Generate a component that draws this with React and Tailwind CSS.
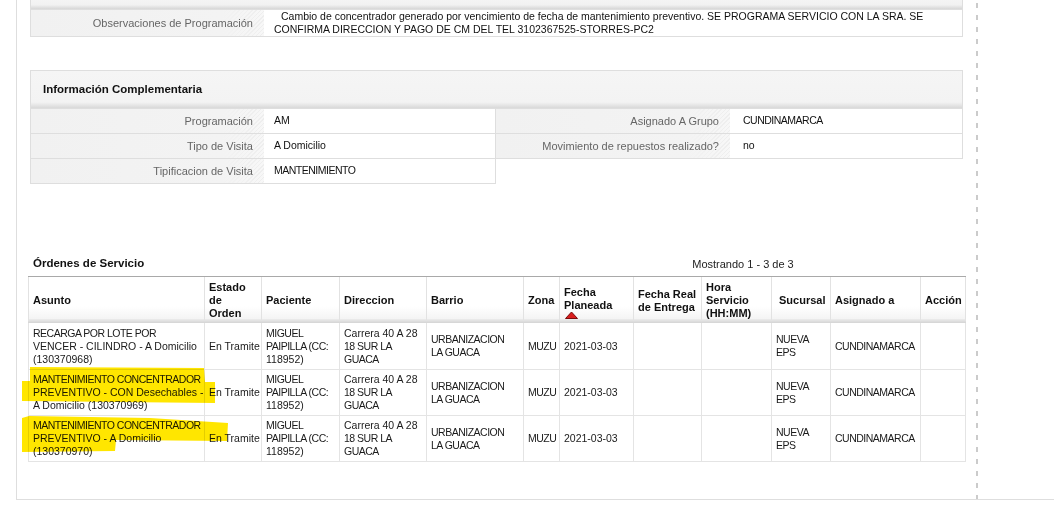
const COLS = 'grid-cols-[177px_57px_78px_87px_97px_36px_74px_68px_70px_59px_90px_45px]'

const ROWS = [
  {
    h: 'h-[47px]',
    asunto: ['RECARGA POR LOTE POR', 'VENCER - CILINDRO - A Domicilio', '(130370968)'],
  },
  {
    h: 'h-[46px]',
    asunto: ['MANTENIMIENTO CONCENTRADOR', 'PREVENTIVO - CON Desechables -', 'A Domicilio (130370969)'],
  },
  {
    h: 'h-[46px]',
    asunto: ['MANTENIMIENTO CONCENTRADOR', 'PREVENTIVO - A Domicilio', '(130370970)'],
  },
]

const isCaps = (s) => /[A-Z]/.test(s) && s === s.toUpperCase()

function Lines({ items }) {
  return (
    <div className="whitespace-nowrap">
      {items.map((line, i) => (
        <div key={i} className={isCaps(line) ? 'tracking-[-0.5px]' : ''}>
          {line}
        </div>
      ))}
    </div>
  )
}

const labelBg =
  'bg-[linear-gradient(to_right,#f1f1f1_0,#f3f3f3_82%,rgba(245,245,245,0.4)_100%),repeating-linear-gradient(135deg,#e9e9e9_0,#e9e9e9_1px,#f9f9f9_1px,#f9f9f9_3px)]'

function InfoRow({ label, value, last, labelW, caps }) {
  return (
    <div className="flex h-[25px] border-b border-[#dedede]">
      <div
        className={`${labelW} ${labelBg} flex items-center justify-end pr-[11px] text-[11px] text-[#666]`}
      >
        {label}
      </div>
      <div
        className={`flex flex-1 items-center bg-white text-[10.5px] text-[#111] ${last ? 'pl-[13px]' : 'pl-[10px]'} ${caps ? 'tracking-[-0.5px]' : ''}`}
      >
        {value}
      </div>
    </div>
  )
}

function HeadCell({ children, className = '' }) {
  return (
    <div
      className={`flex items-center border-r border-[#e2e2e2] pl-[4px] pt-[4px] text-[11px] font-bold leading-[13px] text-[#111] ${className}`}
    >
      {children}
    </div>
  )
}

function Cell({ children, className = '' }) {
  return (
    <div
      className={`flex items-center border-r border-[#e4e4e4] pl-[4px] text-[10.5px] leading-[13px] text-[#1a1a1a] ${className}`}
    >
      {children}
    </div>
  )
}

export default function App() {
  return (
    <div className="relative h-[507px] w-[1054px] overflow-hidden bg-white font-['Liberation_Sans',Arial,sans-serif]">
      <div className="ml-[16px] flex h-[500px] w-[1100px] border-b border-l border-[#dedede]">
        <div className="w-[959px] pl-[13px]">
          {/* observaciones */}
          <div className="w-[933px]">
            <div className="h-[9px] border-x border-[#dedede] bg-[linear-gradient(to_bottom,#f4f4f4_0,#f1f1f1_55%,#d6d6d6_100%)]" />
            <div className="flex h-[28px] border border-[#dedede]">
              <div
                className={`w-[233px] ${labelBg} flex items-center justify-end pr-[11px] text-[11px] text-[#666]`}
              >
                Observaciones de Programación
              </div>
              <div className="flex flex-1 items-center whitespace-nowrap pl-[10px] text-[10.5px] leading-[13px] text-[#111]">
                <div>
                  <div className="indent-[7px]">
                    Cambio de concentrador generado por vencimiento de fecha de mantenimiento preventivo. SE
                    PROGRAMA SERVICIO CON LA SRA. SE
                  </div>
                  <div>CONFIRMA DIRECCION Y PAGO DE CM DEL TEL 3102367525-STORRES-PC2</div>
                </div>
              </div>
            </div>
          </div>

          {/* informacion complementaria */}
          <div className="mt-[33px] w-[933px]">
            <div className="flex h-[38px] items-center border-x border-t border-[#dedede] bg-[linear-gradient(to_bottom,#f5f5f5_0,#f3f3f3_84%,#d9d9d9_100%)] pl-[12px] text-[11.5px] font-bold text-[#111]">
              Información Complementaria
            </div>
            <div className="flex items-start">
              <div className="w-[466px] border-x border-t border-[#dedede]">
                <InfoRow labelW="w-[233px]" label="Programación" value="AM" />
                <InfoRow labelW="w-[233px]" label="Tipo de Visita" value="A Domicilio" />
                <InfoRow labelW="w-[233px]" label="Tipificacion de Visita" value="MANTENIMIENTO" caps />
              </div>
              <div className="flex-1 border-r border-t border-[#dedede]">
                <InfoRow labelW="w-[234px]" label="Asignado A Grupo" value="CUNDINAMARCA" caps last />
                <InfoRow labelW="w-[234px]" label="Movimiento de repuestos realizado?" value="no" last />
              </div>
            </div>
          </div>

          {/* ordenes de servicio */}
          <div className="-ml-[2px] mt-[73px] w-[938px]">
            <div className="mb-[5px] flex h-[14px] items-center">
              <div className="pl-[5px] text-[11.5px] font-bold text-[#111]">Órdenes de Servicio</div>
              <div className="ml-[548px] text-[11px] text-[#222]">Mostrando 1 - 3 de 3</div>
            </div>
            <div className="border-t border-[#a9a9a9]">
              <div className={`grid ${COLS} h-[42px] bg-[linear-gradient(to_bottom,#ffffff_0,#ffffff_70%,#f4f4f4_100%)]`}>
                <HeadCell className="border-l">Asunto</HeadCell>
                <HeadCell>
                  <div>
                    Estado
                    <br />
                    de
                    <br />
                    Orden
                  </div>
                </HeadCell>
                <HeadCell>Paciente</HeadCell>
                <HeadCell>Direccion</HeadCell>
                <HeadCell>Barrio</HeadCell>
                <HeadCell>Zona</HeadCell>
                <HeadCell>
                  <div className="pt-[3px]">
                    Fecha
                    <br />
                    Planeada
                    <svg width="14" height="8" viewBox="0 0 14 8" className="ml-[1px] mt-[-1px] block">
                      <polygon points="0.5,7.5 6.5,1 12.5,7.5" fill="#d91d1d" stroke="#7a0c0c" strokeWidth="1" />
                    </svg>
                  </div>
                </HeadCell>
                <HeadCell>
                  <div>
                    Fecha Real
                    <br />
                    de Entrega
                  </div>
                </HeadCell>
                <HeadCell>
                  <div>
                    Hora
                    <br />
                    Servicio
                    <br />
                    (HH:MM)
                  </div>
                </HeadCell>
                <HeadCell className="pl-[7px]">Sucursal</HeadCell>
                <HeadCell>Asignado a</HeadCell>
                <HeadCell>Acción</HeadCell>
              </div>
              <div className="h-[4px] bg-[linear-gradient(to_bottom,#ececec,#d4d4d4)]" />

              {ROWS.map((row, i) => (
                <div key={i} className={`grid ${COLS} ${row.h} border-b border-[#e4e4e4]`}>
                  <Cell className="border-l">
                    <Lines items={row.asunto} />
                  </Cell>
                  <Cell className="whitespace-nowrap">En Tramite</Cell>
                  <Cell className="pl-[3px]">
                    <Lines items={['MIGUEL', 'PAIPILLA (CC:', '118952)']} />
                  </Cell>
                  <Cell>
                    <Lines items={['Carrera 40 A 28', '18 SUR LA', 'GUACA']} />
                  </Cell>
                  <Cell>
                    <Lines items={['URBANIZACION', 'LA GUACA']} />
                  </Cell>
                  <Cell className="tracking-[-0.5px]">MUZU</Cell>
                  <Cell>2021-03-03</Cell>
                  <Cell />
                  <Cell />
                  <Cell className="pl-[3px]">
                    <Lines items={['NUEVA', 'EPS']} />
                  </Cell>
                  <Cell className="tracking-[-0.5px]">CUNDINAMARCA</Cell>
                  <Cell />
                </div>
              ))}
            </div>
          </div>
        </div>
        <div className="h-full w-[2px] bg-[repeating-linear-gradient(to_bottom,transparent_0,transparent_3px,#cbcbcb_3px,#cbcbcb_8px,transparent_8px,transparent_12px)]" />
      </div>

      {/* highlighter marks */}
      <svg
        className="pointer-events-none absolute left-0 top-0 mix-blend-multiply"
        width="1054"
        height="507"
        viewBox="0 0 1054 507"
      >
        <polygon
          points="30,367 204,368 205,382 215,382 215,403 22,401 22,381 30,381"
          fill="#ffe600"
        />
        <polygon
          points="29,416 150,418 228,423 227,441 116,440 115,451 22,452 22,418"
          fill="#ffe600"
        />
      </svg>
    </div>
  )
}
